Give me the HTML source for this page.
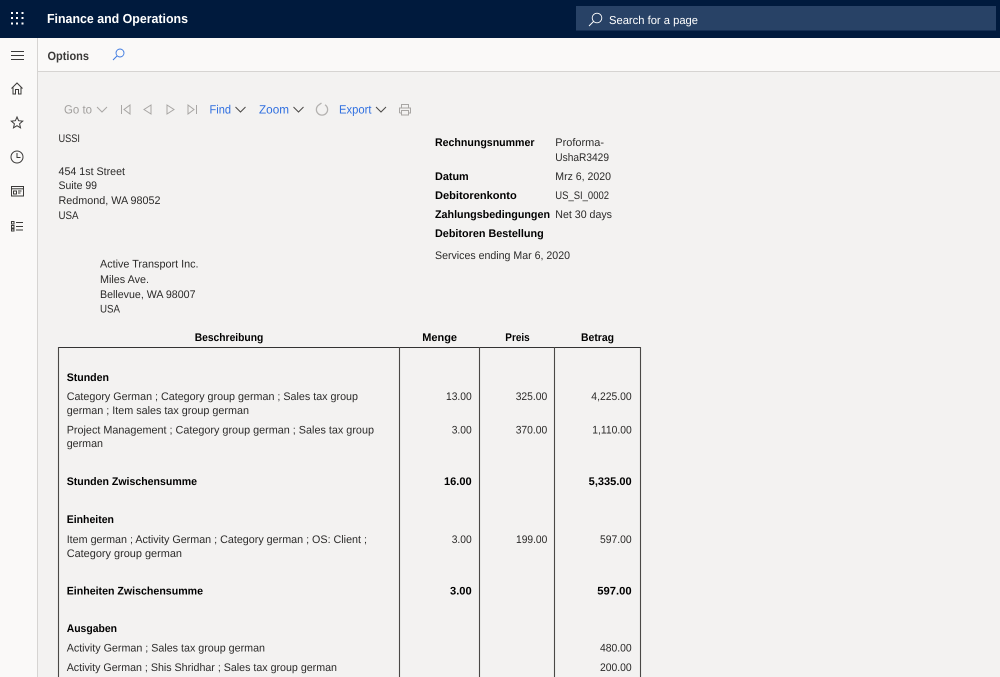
<!DOCTYPE html>
<html lang="en">
<head>
<meta charset="utf-8">
<title>Finance and Operations</title>
<style>
html,body{margin:0;padding:0;width:1000px;height:677px;overflow:hidden;background:#f3f2f1}
svg{display:block;position:absolute;left:0;top:0;filter:blur(.3px)}
text{font-family:"Liberation Sans",Arial,sans-serif;font-size:11px;fill:#2b2a29;text-rendering:geometricPrecision}
.b{font-weight:bold;fill:#000}
.bl{fill:#2f6fe0;font-size:12px}
.g{fill:#a19f9d;font-size:12px}
.i{fill:none;stroke:#3b3a39;stroke-width:1}
.t{fill:none;stroke:#a8a6a4;stroke-width:1}
.c{fill:none;stroke:#4a4846;stroke-width:1.1}
</style>
</head>
<body>
<svg width="1000" height="677" viewBox="0 0 1000 677" xmlns="http://www.w3.org/2000/svg">
<rect width="1000" height="677" fill="#f3f2f1"/>
<rect y="0" width="1000" height="38" fill="#001a3d"/>
<rect x="576" y="6" width="420" height="24.5" fill="#284266"/>
<rect y="38" width="1000" height="33" fill="#faf9f8"/>
<rect x="0" y="38" width="37.5" height="639" fill="#faf9f8"/>
<rect x="37" y="38" width="1" height="639" fill="#d6d4d2"/>
<rect x="38" y="71" width="962" height="1" fill="#d6d4d2"/>

<!-- waffle -->
<g fill="#fff">
<rect x="11" y="12" width="2" height="2"/><rect x="16" y="12" width="2" height="2"/><rect x="21.500" y="12" width="2" height="2"/>
<rect x="11" y="17" width="2" height="2"/><rect x="16" y="17" width="2" height="2"/><rect x="21.500" y="17" width="2" height="2"/>
<rect x="11" y="22.500" width="2" height="2"/><rect x="16" y="22.500" width="2" height="2"/><rect x="21.500" y="22.500" width="2" height="2"/>
</g>
<text x="47" y="23" style="font-size:13px;font-weight:bold;fill:#fff" textLength="141" lengthAdjust="spacingAndGlyphs">Finance and Operations</text>
<!-- top search -->
<circle cx="597" cy="18" r="4.800" fill="none" stroke="#fff" stroke-width=".9"/>
<path d="M593.500 21.500L589 26" stroke="#fff" stroke-width="1" fill="none"/>
<text x="609" y="24" style="font-size:11.500px;fill:#fff" textLength="89" lengthAdjust="spacingAndGlyphs">Search for a page</text>

<!-- sidebar icons -->
<path d="M11 51.500H24M11 55.500H24M11 59.500H24" class="i"/>
<path d="M11.500 88.500L17 83L22.500 88.500M13 87.500V94H15.500V89.500H18.500V94H21V87.500" class="i"/>
<path d="M17 117L18.600 120.700L22.700 121.100L19.600 123.800L20.500 127.800L17 125.700L13.500 127.800L14.400 123.800L11.300 121.100L15.400 120.700Z" class="i"/>
<circle cx="17" cy="157" r="6" class="i"/>
<path d="M17 153V157.500H20.500" class="i"/>
<rect x="11.500" y="186.500" width="12" height="9.500" class="i"/>
<path d="M11.500 188.800H23.500" class="i"/>
<path d="M13.500 191H16.500V194H13.500ZM18 191H21.500M18 193H20.500" class="i" stroke-width=".8"/>
<path d="M11.500 221.500H14V224H11.500ZM11.500 225.500H14V228H11.500ZM11.500 229H14V231H11.500ZM16 222.500H23M16 226.500H23M16 230H23" class="i"/>

<!-- options bar -->
<text x="47.500" y="60" style="font-size:12px;font-weight:bold;fill:#3b3a39" textLength="41.500" lengthAdjust="spacingAndGlyphs">Options</text>
<circle cx="120" cy="53" r="4" fill="none" stroke="#3b78e0" stroke-width=".9"/>
<path d="M117 56L113 60" stroke="#3b78e0" stroke-width="1" fill="none"/>

<!-- toolbar -->
<text x="64" y="113.500" class="g" textLength="28" lengthAdjust="spacingAndGlyphs">Go to</text>
<path d="M97 107L102 112L107 107" class="t"/>
<path d="M121.500 105V114M130 105L124 109.500L130 114Z" class="t"/>
<path d="M151 105L144 109.500L151 114Z" class="t"/>
<path d="M167 105L174 109.500L167 114Z" class="t"/>
<path d="M188 105L194 109.500L188 114ZM196.500 105V114" class="t"/>
<text x="209.500" y="113.500" class="bl" textLength="21.500" lengthAdjust="spacingAndGlyphs">Find</text>
<path d="M235.500 107L240.500 112L245.500 107" stroke="#4a4846" fill="none"/>
<text x="259" y="113.500" class="bl" textLength="30" lengthAdjust="spacingAndGlyphs">Zoom</text>
<path d="M293.500 107L298.500 112L303.500 107" stroke="#4a4846" fill="none"/>
<path d="M319 104.800A5.600 5.600 0 1 0 325 104.800M319 104.800L321.500 103" fill="none" stroke="#b4b2b0" stroke-width="1.300"/>
<text x="339" y="113.500" class="bl" textLength="32.500" lengthAdjust="spacingAndGlyphs">Export</text>
<path d="M376 107L381 112L386 107" stroke="#4a4846" fill="none"/>
<path d="M401.500 108V104.500H408.500V108M399.500 113V108H410.500V113H408.500M401.500 113H399.500M401.500 110.500H408.500V115H401.500Z" class="t"/>

<!-- address -->
<text x="58.500" y="142" textLength="21.500" lengthAdjust="spacingAndGlyphs">USSI</text>
<text x="58.500" y="175" textLength="66.500" lengthAdjust="spacingAndGlyphs">454 1st Street</text>
<text x="58.500" y="189" textLength="38.500" lengthAdjust="spacingAndGlyphs">Suite 99</text>
<text x="58.500" y="204" textLength="102" lengthAdjust="spacingAndGlyphs">Redmond, WA 98052</text>
<text x="58.500" y="219" textLength="20" lengthAdjust="spacingAndGlyphs">USA</text>
<text x="100" y="267.500" textLength="98.500" lengthAdjust="spacingAndGlyphs">Active Transport Inc.</text>
<text x="100" y="283" textLength="49" lengthAdjust="spacingAndGlyphs">Miles Ave.</text>
<text x="100" y="298" textLength="95.500" lengthAdjust="spacingAndGlyphs">Bellevue, WA 98007</text>
<text x="100" y="312.500" textLength="20" lengthAdjust="spacingAndGlyphs">USA</text>

<!-- invoice meta -->
<text x="435" y="146" class="b" textLength="99.500" lengthAdjust="spacingAndGlyphs">Rechnungsnummer</text>
<text x="555.300" y="146" textLength="48.700" lengthAdjust="spacingAndGlyphs">Proforma-</text>
<text x="555.300" y="161" textLength="53.700" lengthAdjust="spacingAndGlyphs">UshaR3429</text>
<text x="435" y="180" class="b" textLength="33.700" lengthAdjust="spacingAndGlyphs">Datum</text>
<text x="555.300" y="180" textLength="55.700" lengthAdjust="spacingAndGlyphs">Mrz 6, 2020</text>
<text x="435" y="199" class="b" textLength="81.700" lengthAdjust="spacingAndGlyphs">Debitorenkonto</text>
<text x="555.300" y="199" textLength="53.700" lengthAdjust="spacingAndGlyphs">US_SI_0002</text>
<text x="435" y="218" class="b" textLength="115" lengthAdjust="spacingAndGlyphs">Zahlungsbedingungen</text>
<text x="555.300" y="218" textLength="56.700" lengthAdjust="spacingAndGlyphs">Net 30 days</text>
<text x="435" y="237" class="b" textLength="108.700" lengthAdjust="spacingAndGlyphs">Debitoren Bestellung</text>
<text x="435" y="259" textLength="135" lengthAdjust="spacingAndGlyphs">Services ending Mar 6, 2020</text>

<!-- table head -->
<text x="194.700" y="341" class="b" textLength="68.600" lengthAdjust="spacingAndGlyphs">Beschreibung</text>
<text x="422.300" y="341" class="b" textLength="34.700" lengthAdjust="spacingAndGlyphs">Menge</text>
<text x="505.300" y="341" class="b" textLength="24.400" lengthAdjust="spacingAndGlyphs">Preis</text>
<text x="581" y="341" class="b" textLength="33" lengthAdjust="spacingAndGlyphs">Betrag</text>

<!-- table lines -->
<path d="M58 347.500H641" stroke="#333" stroke-width="1"/>
<path d="M58.500 347V677M399.500 347V677M479.500 347V677M554.500 347V677M640.500 347V677" class="c"/>

<!-- rows -->
<text x="66.700" y="381" class="b" textLength="42.300" lengthAdjust="spacingAndGlyphs">Stunden</text>
<text x="66.700" y="400" textLength="291.300" lengthAdjust="spacingAndGlyphs">Category German ; Category group german ; Sales tax group</text>
<text x="66.700" y="414" textLength="182.300" lengthAdjust="spacingAndGlyphs">german ; Item sales tax group german</text>
<text x="66.700" y="433.500" textLength="307.300" lengthAdjust="spacingAndGlyphs">Project Management ; Category group german ; Sales tax group</text>
<text x="66.700" y="447" textLength="36.300" lengthAdjust="spacingAndGlyphs">german</text>
<text x="66.700" y="485" class="b" textLength="130.300" lengthAdjust="spacingAndGlyphs">Stunden Zwischensumme</text>
<text x="66.700" y="523" class="b" textLength="47.300" lengthAdjust="spacingAndGlyphs">Einheiten</text>
<text x="66.700" y="543" textLength="300.300" lengthAdjust="spacingAndGlyphs">Item german ; Activity German ; Category german ; OS: Client ;</text>
<text x="66.700" y="557" textLength="115.300" lengthAdjust="spacingAndGlyphs">Category group german</text>
<text x="66.700" y="594.500" class="b" textLength="136.300" lengthAdjust="spacingAndGlyphs">Einheiten Zwischensumme</text>
<text x="66.700" y="632" class="b" textLength="50.300" lengthAdjust="spacingAndGlyphs">Ausgaben</text>
<text x="66.700" y="651.500" textLength="198.300" lengthAdjust="spacingAndGlyphs">Activity German ; Sales tax group german</text>
<text x="66.700" y="671" textLength="270.300" lengthAdjust="spacingAndGlyphs">Activity German ; Shis Shridhar ; Sales tax group german</text>

<!-- numbers -->
<text x="446" y="400" textLength="25.700" lengthAdjust="spacingAndGlyphs">13.00</text>
<text x="515.700" y="400" textLength="31.600" lengthAdjust="spacingAndGlyphs">325.00</text>
<text x="591.300" y="400" textLength="40.400" lengthAdjust="spacingAndGlyphs">4,225.00</text>
<text x="451.700" y="433.500" textLength="20" lengthAdjust="spacingAndGlyphs">3.00</text>
<text x="515.700" y="433.500" textLength="31.600" lengthAdjust="spacingAndGlyphs">370.00</text>
<text x="592.300" y="433.500" textLength="39.400" lengthAdjust="spacingAndGlyphs">1,110.00</text>
<text x="444" y="485" class="b" textLength="27.700" lengthAdjust="spacingAndGlyphs">16.00</text>
<text x="588.700" y="485" class="b" textLength="43" lengthAdjust="spacingAndGlyphs">5,335.00</text>
<text x="451.700" y="543" textLength="20" lengthAdjust="spacingAndGlyphs">3.00</text>
<text x="516" y="543" textLength="31.300" lengthAdjust="spacingAndGlyphs">199.00</text>
<text x="600" y="543" textLength="31.700" lengthAdjust="spacingAndGlyphs">597.00</text>
<text x="450" y="594.500" class="b" textLength="21.700" lengthAdjust="spacingAndGlyphs">3.00</text>
<text x="597.300" y="594.500" class="b" textLength="34.400" lengthAdjust="spacingAndGlyphs">597.00</text>
<text x="600" y="651.500" textLength="31.700" lengthAdjust="spacingAndGlyphs">480.00</text>
<text x="600" y="671" textLength="31.700" lengthAdjust="spacingAndGlyphs">200.00</text>
</svg>
</body>
</html>
